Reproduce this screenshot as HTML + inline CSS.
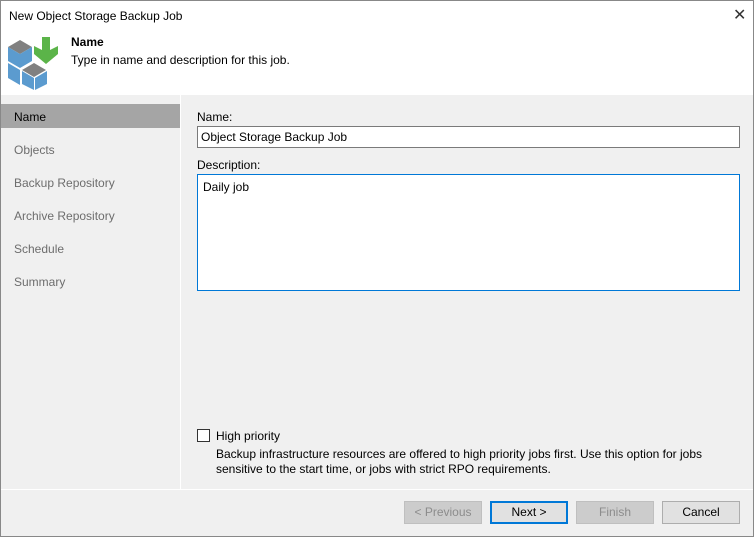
<!DOCTYPE html>
<html><head><style>
*{margin:0;padding:0;box-sizing:border-box}
body{width:754px;height:537px;overflow:hidden;font-family:"Liberation Sans",sans-serif;font-size:12px;color:#000;background:#f0f0f0;position:relative}
.win{position:absolute;left:0;top:0;width:754px;height:537px;border:1px solid #888;}
.abs{position:absolute}
.btn{position:absolute;top:501px;width:78px;height:23px;border:1px solid #adadad;background:#e1e1e1;text-align:center;line-height:21px;font-size:12px}
.dis{background:#cccccc;border-color:#bfbfbf;color:#8c8c8c}
.nav{position:absolute;left:14px;color:#6d6d6d}
</style></head><body>
<div class="abs" style="left:0;top:0;width:754px;height:95px;background:#fff"></div>
<div class="abs" style="left:9px;top:9px;font-size:12px">New Object Storage Backup Job</div>
<div class="abs" style="left:733px;top:5px;font-size:16px;color:#333">✕</div>
<svg class="abs" style="left:6px;top:35px" width="56" height="55" viewBox="0 0 56 55">
<polygon points="2,12 14,5 26,12 14,19" fill="#808080"/>
<polygon points="2,12 14,19 14,33 2,26" fill="#5b9bcf"/>
<polygon points="14,19 26,12 26,26 14,33" fill="#5b9bcf"/>
<polygon points="2,28 14,35 14,50 2,43" fill="#5b9bcf"/>
<polygon points="16,35 28,28 40,35 28,42" fill="#808080"/>
<polygon points="16,36 28,43 28,55 16,49" fill="#5b9bcf"/>
<polygon points="29,43 41,36 41,49 29,55" fill="#5b9bcf"/>
<polygon points="36,2 44,2 44,15 52,11 52,19 40,29 28,19 28,11 36,15" fill="#5bb449"/>
</svg>
<div class="abs" style="left:71px;top:35px;font-weight:bold">Name</div>
<div class="abs" style="left:71px;top:53px">Type in name and description for this job.</div>
<div class="abs" style="left:180px;top:95px;width:1px;height:394px;background:#fff"></div>
<div class="abs" style="left:1px;top:104px;width:179px;height:24px;background:#a5a5a5"></div>
<div class="nav" style="top:110px;color:#000">Name</div>
<div class="nav" style="top:143px">Objects</div>
<div class="nav" style="top:176px">Backup Repository</div>
<div class="nav" style="top:209px">Archive Repository</div>
<div class="nav" style="top:242px">Schedule</div>
<div class="nav" style="top:275px">Summary</div>
<div class="abs" style="left:197px;top:110px">Name:</div>
<div class="abs" style="left:197px;top:126px;width:543px;height:22px;border:1px solid #7a7a7a;background:#fff;padding:3px 3px">Object Storage Backup Job</div>
<div class="abs" style="left:197px;top:158px">Description:</div>
<div class="abs" style="left:197px;top:174px;width:543px;height:117px;border:1px solid #0078d7;background:#fff;padding:5px 5px">Daily job</div>
<div class="abs" style="left:197px;top:429px;width:13px;height:13px;border:1px solid #333;background:#fff"></div>
<div class="abs" style="left:216px;top:429px">High priority</div>
<div class="abs" style="left:216px;top:447px;line-height:15px;width:500px">Backup infrastructure resources are offered to high priority jobs first. Use this option for jobs sensitive to the start time, or jobs with strict RPO requirements.</div>
<div class="abs" style="left:0;top:489px;width:754px;height:1px;background:#fff"></div>
<div class="btn dis" style="left:404px">&lt; Previous</div>
<div class="btn" style="left:490px;border:2px solid #0078d7;line-height:19px">Next &gt;</div>
<div class="btn dis" style="left:576px">Finish</div>
<div class="btn" style="left:662px">Cancel</div>
<div class="win"></div>
</body></html>
